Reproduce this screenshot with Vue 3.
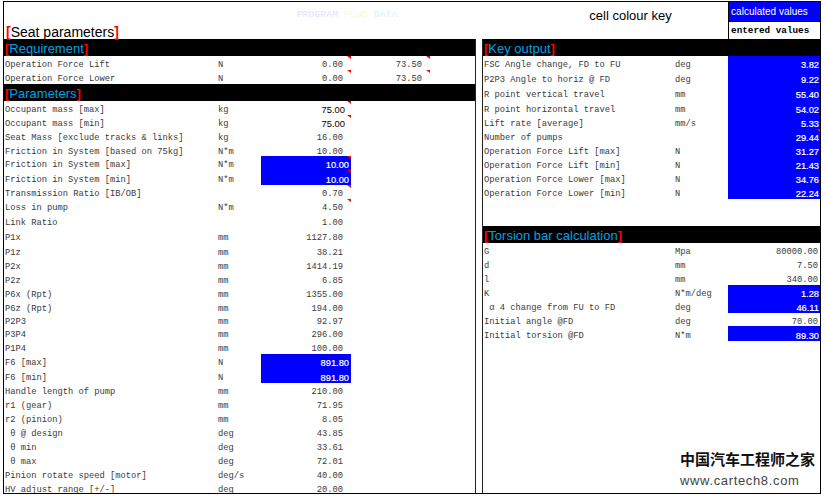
<script setup>
const reqRows = [
  { l: 'Operation Force Lift', u: 'N', v: '0.00', w: '73.50', h: 14, mark: 1, markW: 1 },
  { l: 'Operation Force Lower', u: 'N', v: '0.00', w: '73.50', h: 14, mark: 1, markW: 1 }
]
const paramRows = [
  { l: 'Occupant mass [max]', u: 'kg', v: '75.00', h: 14, sans: 1, mark: 1 },
  { l: 'Occupant mass [min]', u: 'kg', v: '75.00', h: 14, sans: 1, mark: 1 },
  { l: 'Seat Mass [exclude tracks & links]', u: 'kg', v: '16.00', h: 14 },
  { l: 'Friction in System [based on 75kg]', u: 'N*m', v: '10.00', h: 13 },
  { l: 'Friction in System [max]', u: 'N*m', v: '10.00', h: 14, blue: 1, mark: 1 },
  { l: 'Friction in System [min]', u: 'N*m', v: '10.00', h: 15, blue: 1, mark: 1 },
  { l: 'Transmission Ratio [IB/OB]', u: '', v: '0.70', h: 14, mark: 1 },
  { l: 'Loss in pump', u: 'N*m', v: '4.50', h: 14, mark: 1 },
  { l: 'Link Ratio', u: '', v: '1.00', h: 15 },
  { l: 'P1x', u: 'mm', v: '1127.80', h: 15 },
  { l: 'P1z', u: 'mm', v: '38.21', h: 15 },
  { l: 'P2x', u: 'mm', v: '1414.19', h: 14 },
  { l: 'P2z', u: 'mm', v: '6.85', h: 14 },
  { l: 'P6x (Rpt)', u: 'mm', v: '1355.00', h: 14 },
  { l: 'P6z (Rpt)', u: 'mm', v: '194.00', h: 13 },
  { l: 'P2P3', u: 'mm', v: '92.97', h: 13 },
  { l: 'P3P4', u: 'mm', v: '296.00', h: 14 },
  { l: 'P1P4', u: 'mm', v: '100.00', h: 14 },
  { l: 'F6 [max]', u: 'N', v: '891.80', h: 14, blue: 1 },
  { l: 'F6 [min]', u: 'N', v: '891.80', h: 15, blue: 1 },
  { l: 'Handle length of pump', u: 'mm', v: '210.00', h: 14 },
  { l: 'r1 (gear)', u: 'mm', v: '71.95', h: 14 },
  { l: 'r2 (pinion)', u: 'mm', v: '8.05', h: 14 },
  { l: ' θ @ design', u: 'deg', v: '43.85', h: 14 },
  { l: ' θ min', u: 'deg', v: '33.61', h: 14 },
  { l: ' θ max', u: 'deg', v: '72.01', h: 14 },
  { l: 'Pinion rotate speed [motor]', u: 'deg/s', v: '40.00', h: 14 },
  { l: 'HV adjust range [+/-]', u: 'deg', v: '20.00', h: 14 }
]
const keyRows = [
  { l: 'FSC Angle change, FD to FU', u: 'deg', v: '3.82', h: 14, blue: 1 },
  { l: 'P2P3 Angle to horiz @ FD', u: 'deg', v: '9.22', h: 15, blue: 1 },
  { l: 'R point vertical travel', u: 'mm', v: '55.40', h: 15, blue: 1 },
  { l: 'R point horizontal travel', u: 'mm', v: '54.02', h: 15, blue: 1 },
  { l: 'Lift rate [average]', u: 'mm/s', v: '5.33', h: 14, blue: 1 },
  { l: 'Number of pumps', u: '', v: '29.44', h: 14, blue: 1, mark: 1 },
  { l: 'Operation Force Lift [max]', u: 'N', v: '31.27', h: 14, blue: 1 },
  { l: 'Operation Force Lift [min]', u: 'N', v: '21.43', h: 14, blue: 1 },
  { l: 'Operation Force Lower [max]', u: 'N', v: '34.76', h: 14, blue: 1 },
  { l: 'Operation Force Lower [min]', u: 'N', v: '22.24', h: 14, blue: 1 }
]
const torsionRows = [
  { l: 'G', u: 'Mpa', v: '80000.00', h: 14 },
  { l: 'd', u: 'mm', v: '7.50', h: 14 },
  { l: 'l', u: 'mm', v: '340.00', h: 14 },
  { l: 'K', u: 'N*m/deg', v: '1.28', h: 14, blue: 1 },
  { l: ' α 4 change from FU to FD', u: 'deg', v: '46.11', h: 14, blue: 1 },
  { l: 'Initial angle @FD', u: 'deg', v: '70.00', h: 13 },
  { l: 'Initial torsion @FD', u: 'N*m', v: '89.30', h: 15, blue: 1 }
]
</script>

<template>
  <div class="page">
    <div class="frame">
      <header class="top">
        <div class="title-wrap">
          <h1 class="title"><i>[</i>Seat parameters<i>]</i></h1>
        </div>
        <div class="faint"><span>PROGRAM</span> <span>PLUS</span> <span>DATA</span></div>
        <div class="key-label">cell colour key</div>
        <div class="key-cells">
          <div class="key-calc">calculated values</div>
          <div class="key-enter">entered values</div>
        </div>
      </header>
      <div class="body">
        <section class="left">
          <h2 class="band"><i>[</i>Requirement<i>]</i></h2>
          <div v-for="r in reqRows" :key="r.l" class="row" :style="{ height: r.h + 'px' }">
            <span class="lab">{{ r.l }}</span>
            <span class="unit">{{ r.u }}</span>
            <span class="val">{{ r.v }}<b v-if="r.mark" class="mark"></b></span>
            <span class="val2">{{ r.w }}<b v-if="r.markW" class="mark"></b></span>
          </div>
          <h2 class="band"><i>[</i>Parameters<i>]</i></h2>
          <div v-for="r in paramRows" :key="r.l" class="row" :style="{ height: r.h + 'px' }">
            <span class="lab">{{ r.l }}</span>
            <span class="unit">{{ r.u }}</span>
            <span class="val" :class="{ blue: r.blue, sans: r.sans }">{{ r.v }}<b v-if="r.mark" class="mark"></b></span>
          </div>
        </section>
        <section class="right">
          <h2 class="band"><i>[</i>Key output<i>]</i></h2>
          <div v-for="r in keyRows" :key="r.l" class="row" :style="{ height: r.h + 'px' }">
            <span class="lab">{{ r.l }}</span>
            <span class="unit">{{ r.u }}</span>
            <span class="val" :class="{ blue: r.blue }">{{ r.v }}<b v-if="r.mark" class="mark"></b></span>
          </div>
          <div class="spacer"></div>
          <h2 class="band"><i>[</i>Torsion bar calculation<i>]</i></h2>
          <div v-for="r in torsionRows" :key="r.l" class="row" :style="{ height: r.h + 'px' }">
            <span class="lab">{{ r.l }}</span>
            <span class="unit">{{ r.u }}</span>
            <span class="val" :class="{ blue: r.blue }">{{ r.v }}</span>
          </div>
        </section>
      </div>
      <div class="stamp">
        <div class="stamp-cn">中国汽车工程师之家</div>
        <div class="stamp-url">www.cartech8.com</div>
      </div>
    </div>
  </div>
</template>

<style scoped>
.page { width: 826px; height: 497px; background: #fff; overflow: hidden; padding: 1px 0 0 3px; box-sizing: border-box; }
.frame { position: relative; width: 818px; height: 493px; border: 1px solid #000; box-sizing: border-box; display: flex; flex-direction: column; overflow: hidden; }
.top { height: 37px; display: flex; position: relative; flex: none; }
.title-wrap { width: 293px; display: flex; align-items: flex-end; padding-left: 2px; box-sizing: border-box; }
.title { margin: 0; font: 400 14px/14px "Liberation Sans", sans-serif; color: #000; }
.title i, .band i { font-style: normal; color: #f00; font-weight: 700; }
.faint { width: 292px; padding-top: 7px; font: 400 9.9px/12px "Liberation Mono", monospace; white-space: pre; color: #e6e0ff; }
.faint span:nth-child(2) { color: #fbf7d0; }
.faint span:nth-child(3) { color: #d8f0ff; }
.key-label { width: 140px; padding: 6px 0 0 1px; box-sizing: border-box; font: 400 13px/16px "Liberation Sans", sans-serif; color: #000; white-space: nowrap; }
.key-cells { width: 91px; border-left: 1px solid #000; }
.key-calc { height: 19px; background: #00f; color: #fff; font: 400 10px/19px "Liberation Sans", sans-serif; padding-left: 2px; }
.key-enter { height: 18px; border-top: 1px solid #000; box-sizing: border-box; color: #000; font: 700 9.3px/17px "Liberation Mono", monospace; padding-left: 2px; }
.body { display: flex; flex: 1; min-height: 0; }
.left { width: 472px; flex: none; border-right: 1px solid #222; box-sizing: border-box; }
.right { flex: 1; margin-left: 6px; border-left: 1px solid #222; }
.band { margin: 0; height: 17px; background: #000; color: #00a0e6; font: 400 13px/20px "Liberation Sans", sans-serif; padding-left: 1px; overflow: hidden; }
.row { position: relative; display: flex; align-items: center; font: 400 8.75px/14px "Liberation Mono", monospace; color: #3a3a3a; }
.lab { white-space: pre; width: 214px; flex: none; padding: 4px 0 0 1px; box-sizing: border-box; }
.unit { flex: none; width: 43px; padding-top: 4px; }
.val { position: relative; align-self: stretch; width: 90px; flex: none; padding: 4px 8px 0 0; box-sizing: border-box; display: flex; align-items: center; justify-content: flex-end; white-space: pre; }
.val2 { position: relative; align-self: stretch; width: 79px; flex: none; padding: 4px 8px 0 0; box-sizing: border-box; display: flex; align-items: center; justify-content: flex-end; white-space: pre; }
.sans { font: 400 9.4px/14px "Liberation Sans", sans-serif; color: #000; padding-right: 6px; }
.blue { background: #00f; color: #fff; font: 400 9.3px/14px "Liberation Sans", sans-serif; padding-right: 2px; -webkit-text-stroke: 0.2px #fff; }
.mark { position: absolute; top: 0; right: 0; width: 0; height: 0; border-top: 3px solid #f00; border-left: 4px solid transparent; }
.right .lab { width: 192px; }
.right .unit { width: 53px; }
.right .val { width: 92px; padding-right: 2px; }
.right .blue { padding-right: 1px; }
.spacer { height: 27px; }
.stamp { position: absolute; right: 4px; bottom: 3px; width: 136px; }
.stamp-cn { font: 700 15px/20px "Noto Sans CJK SC", sans-serif; white-space: nowrap; color: #111; margin-bottom: 3px; }
.stamp-url { font: 400 13px/18px "Liberation Sans", sans-serif; letter-spacing: 0.65px; white-space: nowrap; color: #444; }
</style>
